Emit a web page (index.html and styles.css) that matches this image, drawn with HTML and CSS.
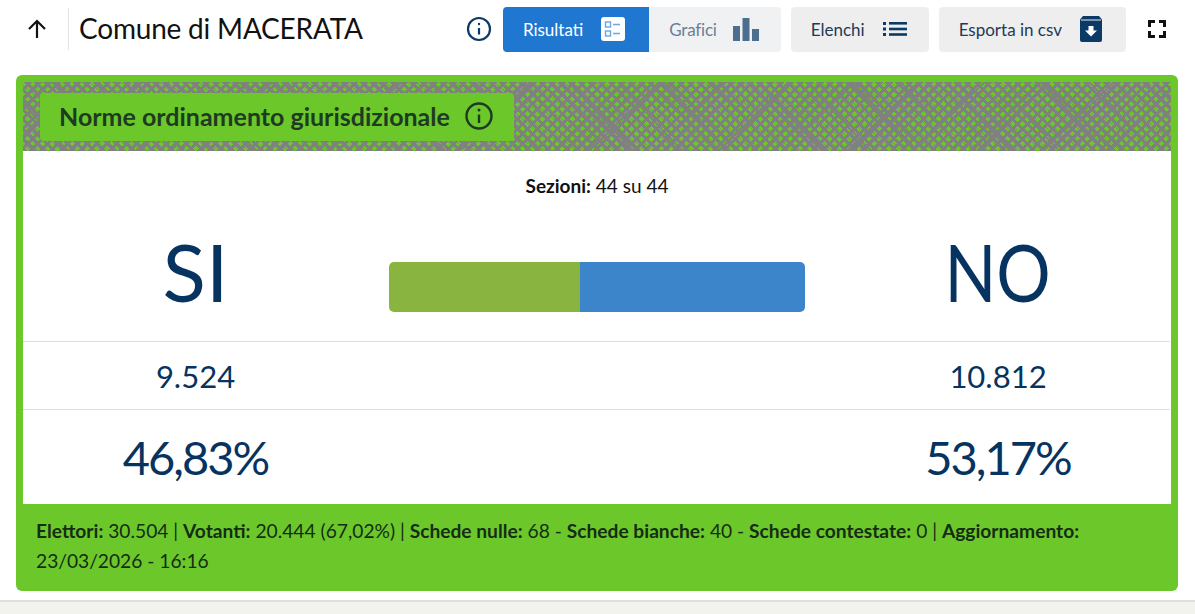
FILE: index.html
```html
<!DOCTYPE html>
<html lang="it">
<head>
  <meta charset="UTF-8">
  <title>Comune di MACERATA</title>
  <link rel="stylesheet" href="styles.css">
</head>
<body>
  <header class="topbar">
    <a class="back" href="#">
      <svg width="24" height="24" viewBox="0 0 24 24" fill="none" stroke="#111" stroke-width="2.2"><path d="M12 21V4M4 12l8-8 8 8"/></svg>
    </a>
    <h1 class="title">Comune di MACERATA</h1>
    <div class="actions">
      <svg class="info" width="26" height="26" viewBox="0 0 26 26" fill="none" stroke="#0b3a66" stroke-width="2.2">
        <circle cx="13" cy="13" r="11"/><path d="M13 12v6.5" /><circle cx="13" cy="8" r="1.2" fill="#0b3a66" stroke="none"/>
      </svg>
      <div class="tabs">
        <a class="btn btn-active" href="#">Risultati
          <svg width="24" height="24" viewBox="0 0 24 24"><rect width="24" height="24" rx="3" fill="#fff"/><g fill="none" stroke="#6ea6e2" stroke-width="1.4"><rect x="4.500" y="5" width="5" height="5"/><rect x="4.500" y="14" width="5" height="5"/><path d="M12 7.500h7M12 16.500h7"/></g></svg>
        </a>
        <a class="btn btn-muted" href="#">Grafici
          <svg width="26" height="23" viewBox="0 0 26 23" fill="#4d6f8f"><rect y="8" width="7" height="15"/><rect x="9.500" width="7" height="23"/><rect x="19" y="11" width="7" height="12"/></svg>
        </a>
      </div>
      <a class="btn btn-list" href="#">Elenchi
        <svg width="24" height="16" viewBox="0 0 24 16" fill="#0b3a66"><rect y="1" width="3" height="3"/><rect x="6" y="1" width="18" height="2.600"/><rect y="6.500" width="3" height="3"/><rect x="6" y="6.700" width="18" height="2.600"/><rect y="12" width="3" height="3"/><rect x="6" y="12.200" width="18" height="2.600"/></svg>
      </a>
      <a class="btn" href="#">Esporta in csv
        <svg width="22" height="26" viewBox="0 0 22 26"><path d="M3 0h16l3 3.500V24a2 2 0 0 1-2 2H2a2 2 0 0 1-2-2V3.500z" fill="#0b3a66"/><path d="M1 4h20" stroke="#eee" stroke-width="1"/><path d="M8.500 10h5v4.500H17l-6 6-6-6h3.500z" fill="#fff"/></svg>
      </a>
      <svg class="expand" width="18" height="18" viewBox="0 0 18 18" fill="none" stroke="#111" stroke-width="3"><path d="M1.500 7V1.500H7M11 1.500h5.500V7M16.500 11v5.500H11M7 16.500H1.500V11"/></svg>
    </div>
  </header>

  <main class="card">
    <div class="card-head">
      <div class="badge">
        <span>Norme ordinamento giurisdizionale</span>
        <svg width="30" height="30" viewBox="0 0 30 30" fill="none" stroke="#1f3a22" stroke-width="2.400">
          <circle cx="15" cy="15" r="12.500"/><path d="M15 13.500V22"/><circle cx="15" cy="9" r="1.500" fill="#1f3a22" stroke="none"/>
        </svg>
      </div>
    </div>

    <div class="card-body">
      <p class="sections"><b>Sezioni:</b> 44 su 44</p>
      <div class="results">
        <div class="cell cell-label">SI</div>
        <div class="cell cell-bar">
          <div class="bar">
            <div class="bar-si" style="width: 46%"></div>
            <div class="bar-no"></div>
          </div>
        </div>
        <div class="cell cell-label"><span class="label-no">NO</span></div>

        <div class="cell cell-votes line">9.524</div>
        <div class="cell line"></div>
        <div class="cell cell-votes line">10.812</div>

        <div class="cell cell-pct line">46,83%</div>
        <div class="cell line"></div>
        <div class="cell cell-pct line">53,17%</div>
      </div>
    </div>

    <div class="card-foot">
      <b>Elettori:</b> 30.504 | <b>Votanti:</b> 20.444 (67,02%) | <b>Schede nulle:</b> 68 - <b>Schede bianche:</b> 40 - <b>Schede contestate:</b> 0 | <b>Aggiornamento:</b> 23/03/2026 - 16:16
    </div>
  </main>

  <footer class="page-foot"></footer>
</body>
</html>
```

FILE: styles.css
```css
* {
  box-sizing: border-box;
}

html, body {
  height: 100%;
}

body {
  margin: 0;
  background: #fff;
  font-family: "Lato", "Open Sans", sans-serif;
  color: #111;
  overflow: hidden;
}

.topbar {
  display: flex;
  align-items: center;
  height: 58px;
  padding: 0 29px 0 25px;
}

.back {
  display: flex;
  padding-right: 19px;
}

.title {
  margin: 0;
  padding-left: 10px;
  height: 42px;
  line-height: 40px;
  border-left: 1px solid #e3e3e3;
  font-size: 28px;
  font-weight: 400;
  letter-spacing: -0.2px;
  white-space: nowrap;
}

.actions {
  margin-left: auto;
  display: flex;
  align-items: center;
  gap: 10px;
}

.info {
  margin-right: 1px;
}

.tabs {
  display: flex;
}

.btn {
  display: flex;
  align-items: center;
  gap: 18px;
  height: 45px;
  padding: 0 24px 0 20px;
  background: #eeeeee;
  border-radius: 4px;
  color: #1d3a57;
  font-size: 17px;
  line-height: 43px;
  text-decoration: none;
  white-space: nowrap;
}

.btn-list {
  padding-right: 22px;
}

.tabs .btn {
  border-radius: 0;
}

.tabs .btn-active {
  background: #1f77d0;
  color: #fff;
  border-radius: 4px 0 0 4px;
}

.tabs .btn-muted {
  gap: 16px;
  padding-right: 22px;
  background: #f0f1f2;
  color: #6b7f92;
  letter-spacing: -0.2px;
  border-radius: 0 4px 4px 0;
}

.expand {
  margin-left: 12px;
}

.card {
  margin: 17px 17px 0 16px;
  height: 516px;
  display: flex;
  flex-direction: column;
  background: #6cc72b;
  border-radius: 6px;
  padding: 7px 7px 0;
}

.card-head {
  height: 69px;
  padding: 11px 0 0 17px;
  background-color: #6cc72b;
  background-image:
    repeating-linear-gradient(47deg, transparent 0 31px, rgba(128, 128, 128, 0.85) 31px 34px, transparent 34px 67px, rgba(128, 128, 128, 0.85) 67px 69px),
    repeating-linear-gradient(-44deg, transparent 0 43px, rgba(128, 128, 128, 0.85) 43px 46px, transparent 46px 88px, rgba(128, 128, 128, 0.85) 88px 90px),
    repeating-linear-gradient(45deg, #808080 0 3px, transparent 3px 7px),
    repeating-linear-gradient(-45deg, #808080 0 3px, transparent 3px 7px),
    repeating-linear-gradient(40deg, rgba(128, 128, 128, 0.5) 0 1px, transparent 1px 5px);
}

.badge {
  display: inline-flex;
  align-items: center;
  gap: 14px;
  height: 48px;
  padding: 0 0 2px 19px;
  width: 474px;
  background: #6cc72b;
  border-radius: 4px;
  color: #1f3a22;
  font-size: 25px;
  font-weight: 700;
  white-space: nowrap;
}

.card-body {
  height: 353px;
  background: #fff;
}

.sections {
  margin: 0;
  padding-top: 24px;
  height: 71px;
  text-align: center;
  font-size: 19px;
  line-height: 22px;
}

.results {
  display: grid;
  grid-template-columns: 345px 458px 344px;
  grid-template-rows: 119px 68px 95px;
  margin-right: 1px;
}

.cell {
  display: flex;
  align-items: center;
  justify-content: center;
  color: #06335f;
}

.line {
  border-top: 1px solid #dedede;
}

.cell-label {
  font-size: 80px;
  padding-bottom: 22px;
}

.label-no {
  display: inline-block;
  transform: scaleX(0.85);
}

.cell-bar {
  padding: 11px 21px 0;
}

.bar {
  display: flex;
  width: 416px;
  height: 50px;
  border-radius: 5px;
  overflow: hidden;
}

.bar-si {
  background: #8ab440;
}

.bar-no {
  flex: 1;
  background: #3d85ca;
}

.cell-votes {
  font-size: 31px;
}

.cell-pct {
  font-size: 47px;
  letter-spacing: -2px;
}

.card-foot {
  flex: 1;
  padding: 12px 13px 0;
  color: #152d14;
  font-size: 19.2px;
  line-height: 30px;
}

.page-foot {
  margin-top: 9px;
  height: 20px;
  background: #f3f3ee;
  border-top: 2px solid #dfdfdf;
}
```
